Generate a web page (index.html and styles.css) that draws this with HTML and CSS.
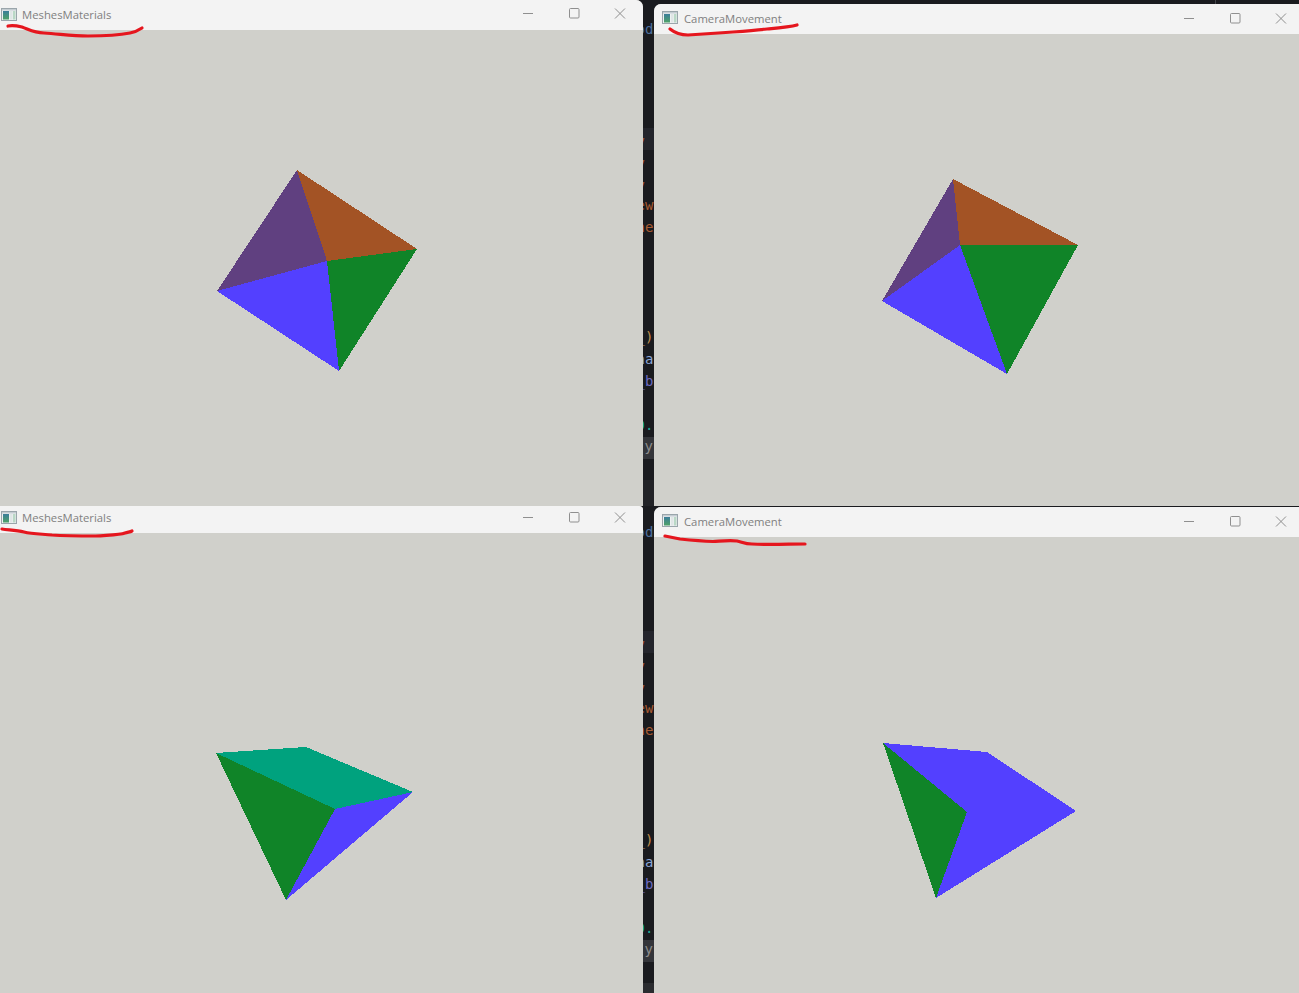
FILE: index.html
```html
<!DOCTYPE html>
<html lang="en">
<head>
<meta charset="utf-8">
<title>Windows</title>
<link rel="stylesheet" href="styles.css">
</head>
<body>
<svg class="defs" width="0" height="0" aria-hidden="true">
  <defs>
    <linearGradient id="iconFill" x1="0" y1="0" x2="0" y2="1">
      <stop offset="0" stop-color="#3b7d9a"/>
      <stop offset="1" stop-color="#4fa268"/>
    </linearGradient>
  </defs>
  <symbol id="app" viewBox="0 0 16 13">
    <rect x=".5" y=".5" width="15" height="12" fill="#eef1f2" stroke="#9aa5ab"/>
    <rect x="1" y="1" width="14" height="1.500" fill="#c3ccd1"/>
    <rect x="2" y="3" width="6" height="8.500" fill="url(#iconFill)"/>
    <rect x="9" y="3" width="2.500" height="8.500" fill="#dfe6e6"/>
    <rect x="12" y="3" width="2.500" height="8.500" fill="#b9d8c6"/>
  </symbol>
</svg>
<main class="desktop">
  <span class="seam"></span>
  <div class="code-strip">
    <span class="band band-a"></span><span class="band band-b"></span><span class="band band-c"></span><span class="band band-d"></span><span class="band band-e"></span><span class="band band-f"></span>
    <span class="frag blue f1">od</span>
    <span class="frag orange f2">v</span><span class="frag orange f3">v</span><span class="frag orange f4">v</span>
    <span class="frag orange f5">ew</span><span class="frag orange f6">ne</span>
    <span class="frag yellow f7">_)</span><span class="frag lightblue f8">na</span><span class="frag purple f9">_b</span>
    <span class="frag teal f10">0.</span><span class="frag grey start f11">y:</span>
    <span class="frag blue f12">od</span>
    <span class="frag orange f13">v</span><span class="frag orange f14">v</span><span class="frag orange f15">v</span>
    <span class="frag orange f16">ew</span><span class="frag orange f17">ne</span>
    <span class="frag yellow f18">_)</span><span class="frag lightblue f19">na</span><span class="frag purple f20">_b</span>
    <span class="frag teal f21">0.</span><span class="frag grey start f22">y:</span>
  </div>

  <section class="window win-tl">
    <header class="titlebar">
      <svg class="app-icon"><use href="#app"/></svg>
      <span class="title">MeshesMaterials</span>
      <div class="controls">
        <svg class="ctl" viewBox="0 0 46 30"><path d="M18 14.500h10"/></svg>
        <svg class="ctl" viewBox="0 0 46 30"><rect x="18.500" y="9.500" width="9.500" height="9.500" rx="1"/></svg>
        <svg class="ctl" viewBox="0 0 46 30"><path d="M18 9.500l10 10M28 9.500l-10 10"/></svg>
      </div>
    </header>
    <svg class="scene" viewBox="0 30 643 476">
      <polygon fill="#604080" points="297,170 327,261 217,291"/>
      <polygon fill="#a35325" points="297,170 417,249 327,261"/>
      <polygon fill="#108428" points="327,261 417,249 339,371"/>
      <polygon fill="#5340ff" points="327,261 339,371 217,291"/>
    </svg>
  </section>

  <section class="window win-tr">
    <header class="titlebar">
      <svg class="app-icon"><use href="#app"/></svg>
      <span class="title">CameraMovement</span>
      <div class="controls">
        <svg class="ctl" viewBox="0 0 46 30"><path d="M18 14.500h10"/></svg>
        <svg class="ctl" viewBox="0 0 46 30"><rect x="18.500" y="9.500" width="9.500" height="9.500" rx="1"/></svg>
        <svg class="ctl" viewBox="0 0 46 30"><path d="M18 9.500l10 10M28 9.500l-10 10"/></svg>
      </div>
    </header>
    <svg class="scene" viewBox="654 34 645 472">
      <polygon fill="#604080" points="953,179 960,245 882,301"/>
      <polygon fill="#a35325" points="953,179 1078,245 960,245"/>
      <polygon fill="#108428" points="960,245 1078,245 1007,374"/>
      <polygon fill="#5340ff" points="960,245 1007,374 882,301"/>
    </svg>
  </section>

  <section class="window win-bl">
    <header class="titlebar short">
      <svg class="app-icon"><use href="#app"/></svg>
      <span class="title">MeshesMaterials</span>
      <div class="controls">
        <svg class="ctl" viewBox="0 0 46 30"><path d="M18 14.500h10"/></svg>
        <svg class="ctl" viewBox="0 0 46 30"><rect x="18.500" y="9.500" width="9.500" height="9.500" rx="1"/></svg>
        <svg class="ctl" viewBox="0 0 46 30"><path d="M18 9.500l10 10M28 9.500l-10 10"/></svg>
      </div>
    </header>
    <svg class="scene" viewBox="0 533 643 460">
      <polygon fill="#00a27e" points="216,753 306,747 413,792 335,809"/>
      <polygon fill="#108428" points="216,753 335,809 286,900"/>
      <polygon fill="#5340ff" points="335,809 413,792 286,900"/>
    </svg>
  </section>

  <section class="window win-br">
    <header class="titlebar">
      <svg class="app-icon"><use href="#app"/></svg>
      <span class="title">CameraMovement</span>
      <div class="controls">
        <svg class="ctl" viewBox="0 0 46 30"><path d="M18 14.500h10"/></svg>
        <svg class="ctl" viewBox="0 0 46 30"><rect x="18.500" y="9.500" width="9.500" height="9.500" rx="1"/></svg>
        <svg class="ctl" viewBox="0 0 46 30"><path d="M18 9.500l10 10M28 9.500l-10 10"/></svg>
      </div>
    </header>
    <svg class="scene" viewBox="654 537 645 456">
      <polygon fill="#5340ff" points="883,743 987,752 1076,811 936,898 967,812"/>
      <polygon fill="#108428" points="883,743 967,812 936,898"/>
    </svg>
  </section>

  <svg class="ink" viewBox="0 0 1299 993">
    <path d="M8 26C12 25 18 26 22 27C30 30 34 33 44 33C60 34 72 36 88 36C105 36 120 35 130 33C135 32 139 30 142 28"/>
    <path d="M670 29C675 33 680 35 688 35C705 34 718 33 733 32C745 31 757 30 767 29C778 28 790 27 797 25"/>
    <path d="M2 529C8 530 16 530 24 532C32 534 42 534 52 535C66 536 80 536 96 536C108 535 120 535 125 533C128 532 130 532 132 531"/>
    <path d="M665 536C670 537 675 538 680 539C690 540 700 541 713 541.500C722 541 730 540 737 541C742 542 745 544 752 544C768 545 790 544 805 544"/>
  </svg>
</main>
</body>
</html>
```

FILE: styles.css
```css
* { box-sizing: border-box; }
html, body { margin: 0; height: 100%; overflow: hidden; }
body { background: #1a1b1f; font-family: "Open Sans", "Noto Sans", sans-serif; }

.defs { position: absolute; }
.desktop { position: relative; width: 1299px; height: 993px; overflow: hidden; background: #1a1b1f; }
.seam { position: absolute; left: 1215px; top: 0; width: 1px; height: 4px; background: #45464a; }

.window { position: absolute; display: flex; flex-direction: column; background: #d0d0cb; overflow: hidden; }
.win-tl { left: 0; top: 0; width: 643px; height: 506px; border-top-right-radius: 7px; }
.win-tr { left: 654px; top: 4px; width: 645px; height: 502px; border-top-left-radius: 7px; }
.win-bl { left: 0; top: 506px; width: 643px; height: 487px; border-top-right-radius: 4px; }
.win-br { left: 654px; top: 507px; width: 645px; height: 486px; border-top-left-radius: 7px; }

.titlebar { display: flex; align-items: center; flex: none; height: 30px; background: #f3f3f3; padding-left: 1px; }
.win-tr .titlebar, .win-br .titlebar { padding-left: 8px; }
.titlebar.short { height: 27px; padding-bottom: 3px; }

.app-icon { width: 16px; height: 13px; flex: none; margin: -2px 5px 0 0; }
.win-tr .app-icon, .win-br .app-icon { margin: -3px 6px 0 0; }
.title { font-size: 11.3px; line-height: 16px; color: #808080; white-space: nowrap; }

.controls { display: flex; margin-left: auto; }
.ctl { width: 46px; height: 30px; fill: none; stroke: #8f8f8f; stroke-width: 1; }
.win-tl .controls { margin-top: -2px; }
.win-bl .controls { margin-top: -1px; }
.win-tr .controls, .win-br .controls { margin-right: -5px; }

.scene { display: block; flex: 1; width: 100%; min-height: 0; shape-rendering: crispEdges; }

.code-strip { position: absolute; left: 643px; top: 0; width: 11px; height: 993px; overflow: hidden; background: #1a1b1f; font-family: "DejaVu Sans Mono", monospace; font-size: 14px; line-height: 16px; }
.band { position: absolute; left: 0; width: 100%; background: #24252c; }
.band-a { top: 128px; height: 22px; }
.band-b { top: 631px; height: 22px; }
.band-c { top: 437px; height: 22px; background: #34353a; }
.band-d { top: 940px; height: 22px; background: #34353a; }
.band-e { top: 480px; height: 26px; background: #222327; }
.band-f { top: 983px; height: 10px; background: #2a2b2f; }

.frag { position: absolute; left: -6.4px; white-space: nowrap; }
.frag.start { left: 1.600px; }
.blue { color: #4d6f9f; }
.orange { color: #a85a32; }
.yellow { color: #c08f50; }
.lightblue { color: #8ba6d6; }
.purple { color: #6e6ac0; }
.teal { color: #1ba896; }
.grey { color: #8c8c8c; }

.f1 { top: 21px; }
.f2 { top: 133px; }
.f3 { top: 155px; }
.f4 { top: 177px; }
.f5 { top: 197px; }
.f6 { top: 219px; }
.f7 { top: 329px; }
.f8 { top: 351px; }
.f9 { top: 373px; }
.f10 { top: 417px; }
.f11 { top: 438px; }
.f12 { top: 524px; }
.f13 { top: 636px; }
.f14 { top: 658px; }
.f15 { top: 680px; }
.f16 { top: 700px; }
.f17 { top: 722px; }
.f18 { top: 832px; }
.f19 { top: 854px; }
.f20 { top: 876px; }
.f21 { top: 920px; }
.f22 { top: 941px; }

.ink { position: absolute; left: 0; top: 0; width: 1299px; height: 993px; fill: none; stroke: #e5161e; stroke-width: 3.200; stroke-linecap: round; stroke-linejoin: round; pointer-events: none; }
```
